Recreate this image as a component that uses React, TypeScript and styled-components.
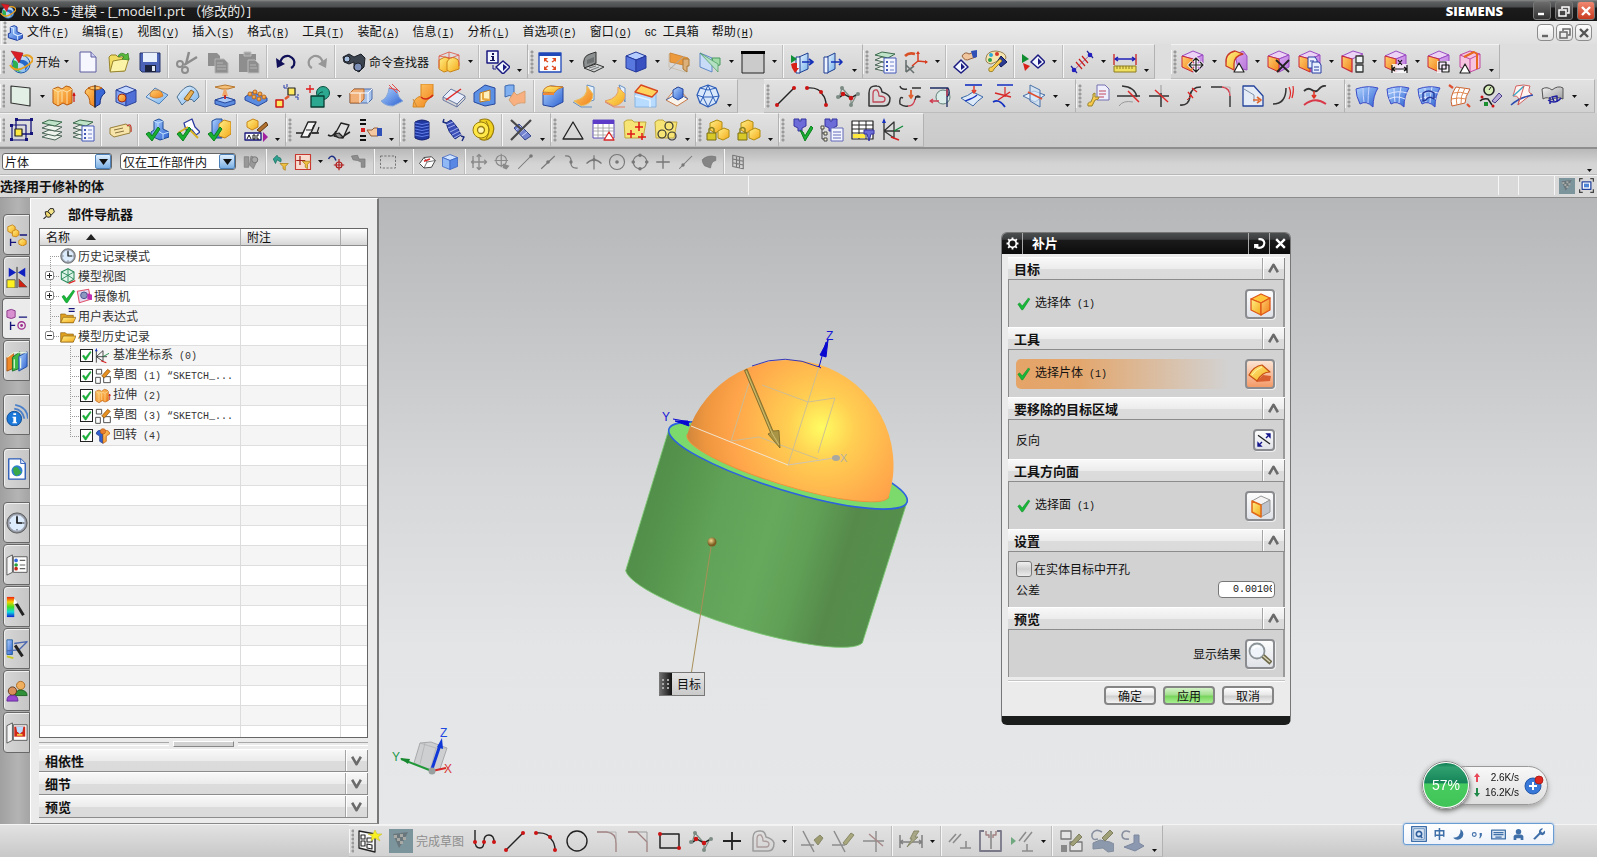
import React, { useState } from 'react';
import styled, { createGlobalStyle, css } from 'styled-components';

/* ---------- drawing data ---------- */

type Shape = [d: string, fill?: string, stroke?: string, width?: number];

const o = (x: number, y: number, r: number) =>
  `M${x - r} ${y}a${r} ${r} 0 1 0 ${2 * r} 0a${r} ${r} 0 1 0 ${-2 * r} 0Z`;
const N = 'none';
const GO = 'url(#gOrange)';
const GB = 'url(#gBlue)';
const GY = 'url(#gYellow)';
const GG = 'url(#gGray)';
const GP = 'url(#gPurple)';
const GS = 'url(#gSky)';
const RED = '#cc1414';
const NAVY = '#14147a';

const dot = (x: number, y: number, r = 2, fill = RED): Shape => [o(x, y, r), fill];

const block = (top: string, left: string, right: string, line: string): Shape[] => [
  ['M2 6L12 2L22 6L12 10Z', top, line],
  ['M2 6L12 10V22L2 18Z', left, line],
  ['M22 6L12 10V22L22 18Z', right, line],
];

const sync: Shape[] = [
  ['M1 6L12 1L22 5L12 9Z', '#ecd2f4', '#9a4cc4'],
  ['M12 9L22 5V17L12 22Z', GP, '#9a4cc4'],
  ['M1 6L12 9V22L1 17Z', GO, '#c8283c'],
];

const layerStack: Shape[] = [
  ['M2 19L9 16L22 18L15 22Z', '#eef3ee', '#4c6658'],
  ['M2 15L9 12L22 14L15 18Z', '#eef3ee', '#4c6658'],
  ['M2 10L9 7L22 9L15 13Z', '#eef3ee', '#4c6658'],
  ['M2 5L9 2L22 4L15 8Z', '#bfe3c8', '#3c6a4c'],
];

const listPage: Shape[] = [
  ['M11 8H23V23H11Z', '#f4f6ff', '#4458b8'],
  ['M13 12H15M13 16H15M13 20H15', N, '#4458b8', 2],
  ['M17 12H21M17 16H21M17 20H21', N, '#7080c8'],
];

const tick: Shape = ['M1 16L4 14L7 18L13 9L15 11L7 23Z', '#18b030', '#0c8020'];

const lBlock: Shape[] = [
  ['M9 3L14 1L18 3V11L24 14V19L15 22L6 18V14L9 12Z', GB, '#1c4c98'],
  ['M9 3L13 5V13L18 16L24 14M13 5L18 3M18 16V21', N, '#bfe0ff'],
];

const sheetBlue: Shape = ['M1 5Q12 1 23 4Q18 12 18 23Q11 16 5 20Q1 12 1 5Z', GB, '#3c4cc8'];

const splineNodes: Shape[] = [
  ['M6 4L3 14L7 10L15 14L21 10L15 21L15 14L6 4', N, '#7c8c84', 1.2],
  ['M4 13L8 10L15 14L20 11', N, '#222', 1.4],
  dot(6, 4, 2, '#7c8c84'), dot(2, 13, 2, '#7c8c84'), dot(15, 21, 2, '#7c8c84'), dot(22, 10, 2, '#7c8c84'),
  dot(7, 10, 2.3), dot(15, 14, 2.3),
];

const funnel: Shape = ['M5 1H10V3H12V1H17V8L13 10V13H9V10L5 8Z', '#6c6cd8', '#3434a0'];

const icons: Record<string, Shape[]> = {
  nx: [
    [o(12, 14, 9), GS, '#1c5ca8'],
    ['M4 10Q10 11 9 16T13 22Q6 22 4 17Z', '#2cb050'],
    ['M9 10Q18 9 20 15L16 21Q17 14 11 13Z', '#2468c8'],
    ['M1 15Q6 23 16 17T23 8Q20 4 14 6', N, '#e8a020', 2],
    ['M2 1L14 3L10 13Z', '#dc1c24', '#981018', 0.5],
  ],
  fileNew: [['M4 2H15L20 7V22H4Z', '#f6f6ff', '#5c5ca0'], ['M15 2V7H20', '#cfd0f0', '#5c5ca0']],
  open: [
    ['M2 7L4 5H9L11 7H19L17 21H3Z', '#f0dc60', '#98842c'],
    ['M6 11L22 8L18 21L3 22Z', '#fbf4a8', '#98842c'],
    ['M11 6Q14 1 19 5L21 3L22 10L15 9L17 7Q14 4 12 7Z', '#58b83c', '#2c7c20', 0.7],
  ],
  save: [
    ['M2 3H22V22H4L2 20Z', '#4c64b8', '#24346c'],
    ['M5 3H19V12H5Z', '#e8f0fc'],
    ['M7 15H18V22H7Z', '#1c2440'],
    ['M14 16H17V21H14Z', '#dfe6f4'],
  ],
  cut: [
    ['M14 2L11 14M22 7L9 15', N, '#8c8c8c', 2.5],
    [o(5, 14, 3), N, '#8c8c8c', 2],
    [o(10, 20, 3), N, '#8c8c8c', 2],
  ],
  copy: [['M2 3H11L14 6V16H2Z', '#8e8e8e'], ['M9 9H18L22 13V23H9Z', '#8e8e8e', '#b4b4b4'], ['M11 13H17M11 16H20M11 19H20', N, '#b4b4b4']],
  paste: [['M2 4H19V22H2Z', '#8e8e8e'], ['M7 2H14V6H7Z', '#9c9c9c', '#bbb'], ['M11 10H18L22 14V23H11Z', '#8e8e8e', '#bcbcbc'], ['M13 15H19M13 18H20', N, '#b4b4b4']],
  undo: [['M6 13Q8 5 15 6Q22 9 20 15Q19 17 17 18', N, '#101058', 2.2], ['M2 8L3 18L11 14Z', '#101058']],
  redo: [['M18 13Q16 5 9 6Q2 9 4 15Q5 17 7 18', N, '#979797', 2.2], ['M22 8L21 18L13 14Z', '#979797']],
  bino: [
    ['M1 7L7 4L12 7L19 4L23 8L22 17L17 22L12 19V12L7 14L2 12Z', '#3c4450', '#1c2028'],
    [o(5, 9, 3), '#a8c0e0', '#1c2028'],
    [o(16, 17, 4), '#7c90b8', '#1c2028'],
  ],
  feature: [
    ['M2 10L8 7L13 9V20L7 22L2 19Z', GY, '#c88418'],
    ['M10 12Q13 6 18 8Q22 9 22 13V19L13 22L10 20Z', GY, '#c88418'],
    ['M2 6L12 2L22 5V16M2 6V18M12 2V9M2 6L14 8L22 5', N, '#e05040', 0.8],
  ],
  info: [
    ['M1 1H12V13H1Z', '#f2f6ff', '#1a1a80', 1.5],
    ['M6 3H8V5H6ZM5 6H8V10H9V11H4V10H6V7H5Z', '#14145c'],
    ['M10 17L17 11L24 17L17 24Z', '#f2f6ff', '#1a1a80', 1.5],
    ['M17 14L21 17L17 21Z', '#1a1a80'],
    ['M7 15V19H10', N, '#1a1a80'],
  ],
  fit: [
    ['M1 3H23V22H1Z', '#fafcff', '#2048b8', 1.3],
    ['M1 3H23V6H1Z', '#2048b8'],
    ['M7 10L10 12M17 10L14 12M7 18L10 16M17 18L14 16', N, '#e04820', 1.5],
    ['M6 8H10L6 12ZM18 8H14L18 12ZM6 20H10L6 16ZM18 20H14L18 16Z', '#e04820'],
  ],
  laptop: [
    ['M3 17Q1 6 9 4L15 2V13L4 18Z', '#8c9090', '#333'],
    ['M3 18L15 14L23 17L13 22Z', '#d0d4d4', '#333'],
    ['M6 10L13 7V12L6 14Z', '#6c7070'],
    ['M8 18L15 16M10 20L18 17', N, '#777'],
  ],
  cubeBlue: block('#b4ccff', '#5878e0', '#3850c0', '#24389c'),
  planes: [
    ['M2 4L18 8V22L2 17Z', N, '#c8c0b0'],
    ['M3 3L21 8V16L3 12Z', '#ec9a3c', '#d08838'],
    ['M16 9H22V16H20V22L16 19Z', '#dcb078', '#a87838'],
    ['M2 20L17 6', N, '#a8a8a8'],
  ],
  clip: [
    ['M2 3L14 8V22L2 17Z', '#c8dcf8', '#6088c8'],
    ['M14 8H22V15L16 16Z', '#a0dca8', '#48985c'],
    ['M2 3L20 22V14Z', '#b4e0c4', '#48985c', 0.7],
  ],
  window: [['M1 2H23V23H1Z', '#cbcbcb', '#222', 1], ['M0 1H24V4H0Z', '#000']],
  imp: [
    ['M9 7L18 3V19L9 23Z', GS, '#1c3c90'],
    ['M6 7H10V23H6Z', '#eef4ff', '#1c3c90'],
    ['M1 5L7 9L1 13Z', '#109038'], ['M1 14L4 13H7V18H9L5 23L2 18Z', '#d82018'],
    ['M12 12H23M19 9L23 12L19 15', N, '#1430b8', 1.7],
  ],
  exp: [
    ['M6 7L14 3V19L6 23Z', GS, '#1c3c90'], ['M3 7H7V23H3Z', '#eef4ff', '#1c3c90'],
    ['M10 12H21M18 9L21 12L18 15', N, '#1430b8', 1.7],
  ],
  layers: layerStack,
  layerList: [...layerStack, ...listPage],
  csysMove: [
    ['M2 10V22M2 22L10 16M2 15L10 23', N, '#687070', 1.6],
    ['M14 2V11L23 12M14 11L8 16', N, '#d83c20', 1.5],
    ['M1 6Q5 2 11 4', N, '#d85028', 2.6],
    ['M12 4L14 1L16 4ZM21 10L24 12L21 14Z', '#d83c20'],
  ],
  handTag: [
    ['M9 6Q12 1 16 4L21 2L23 7L17 9Q12 12 9 6Z', '#f0c49c', '#94603c'],
    ['M18 1L24 0V7L20 8Z', '#3050b8'],
    ['M1 17L8 10L15 17L8 23Z', '#f2f6ff', '#1a1a80', 1.5], ['M8 13L12 17L8 20Z', '#1a1a80'],
  ],
  palette: [
    ['M2 8Q3 1 12 1Q22 2 22 8Q20 12 14 11L7 14Q1 13 2 8Z', '#f4e4b0', '#988050'],
    dot(7, 5, 2, '#2ca8d8'), dot(13, 4, 2, '#d83828'), dot(6, 10, 2, '#2ca048'),
    ['M13 12L17 6L23 12L17 17Z', '#2c3c90', '#10185c'],
    ['M5 21Q4 17 8 17L16 9L18 11L10 19Q9 23 5 21Z', GY, '#98842c'],
  ],
  triTag: [
    ['M1 4L8 9L1 13Z', '#108c30'], ['M2 13L9 16L4 21Z', '#d82018'],
    ['M10 12L17 5L24 12L17 18Z', '#f2f6ff', '#1a1a80', 1.5], ['M17 8L21 12L17 15Z', '#1a1a80'],
  ],
  measure: [
    ['M2 22L22 3', N, '#a060a0'], ['M1 16L7 23M17 1L23 8', N, '#24249c', 1.2],
    ['M6 12L12 19M9 9L15 16M12 6L18 13', N, '#c81c1c', 1.2],
    dot(4, 20, 2.3, '#2020c0'), dot(20, 5, 2.3, '#2020c0'),
  ],
  ruler: [
    ['M1 4V15M23 4V15', N, '#cc2020', 1.3],
    ['M2 9H22M5 7L2 9L5 11M19 7L22 9L19 11', N, '#2020b8', 1.5],
    ['M1 16H23V22H1Z', '#f0e060', '#8c7c20'],
    ['M4 16V19M7 16V19M10 16V19M13 16V19M16 16V19M19 16V19', N, '#8c7c20'],
  ],
  syncMove: [...sync, ['M15 8V22M8 15H22M12 11L15 8L18 11M12 19L15 22L18 19M11 12L8 15L11 18M19 12L22 15L19 18', N, '#fff', 3], ['M15 8V22M8 15H22M12 11L15 8L18 11M12 19L15 22L18 19M11 12L8 15L11 18M19 12L22 15L19 18', N, '#222', 1.2]],
  syncPull: [
    ['M11 5L19 1L23 6V20L14 18Z', GP, '#9a4cc4'], ['M2 14Q1 3 11 1L19 4Q10 6 10 14V20L2 16Z', GY, '#c83828', 1.3], ['M15 13L20 22H10Z', '#fff', '#222', 1.2],
  ],
  syncDelete: [...sync, ['M9 10L22 22M22 10L10 22', N, '#222', 1.8]],
  syncCopy: [...sync, ['M10 7H17L19 10V18H10Z', '#e6eeff', '#283ca0'], ['M14 12H21L23 15V23H14Z', '#e6eeff', '#283ca0'], ['M12 11H16M16 17H21M16 20H21', N, '#283ca0']],
  syncGroup: [
    ['M1 6L12 1L22 4L11 9Z', '#ecd2f4', '#9a4cc4'], ['M1 6L11 9V22L1 17Z', GO, '#c8283c', 1.3],
    ['M15 6H22V13H15ZM15 15H22V22H15Z', '#eef4f4', '#333', 1.3],
  ],
  syncDim: [...sync, ['M8 14H23V23H8Z', '#ffffffcc'], ['M8 15V23M23 15V23M8 19H23M11 17L8 19L11 21M20 17L23 19L20 21M14 10L18 15M18 10L14 15', N, '#111', 1.2]],
  syncPattern: [...sync, ['M10 11H23V23H10Z', '#ffffffcc'], ['M12 12H19V19H12ZM15 15H22V22H15Z', N, '#111', 1.2]],
  syncShell: [
    ['M2 5L12 1L22 4V18L12 22L2 17Z', '#f6c4e0', '#c048a0'], ['M2 5L12 9L22 4M12 9V22', N, '#c048a0'], ['M6 7L16 2L19 4V19', N, '#e86820', 2], ['M7 14L12 23H2Z', '#fff', '#222', 1.2],
  ],
  plane: [['M2 2L21 4V22L2 19Z', '#e2efe4', '#333', 1.2]],
  extrude: [
    ['M1 5L6 3L10 5L14 2L18 3L20 5V19L15 21L11 19L6 22L1 19Z', GO, '#b85c10'], ['M6 8V21M10 7V18M1 5L6 8L10 6L15 8L20 5M15 8V20', N, '#fbe0a8'], ['M22 10V18M21 12L22 9L23 12', N, RED, 1.2],
  ],
  revolve: [
    ['M12 4Q2 3 2 9Q7 12 7 20L12 23Z', GO, '#b85c10'], ['M12 4Q22 3 22 9Q17 12 17 20L12 23Z', '#3868d8', '#102c80'],
    ['M5 4Q12 0 19 4Q12 8 5 4Z', '#ffc060', '#b85c10'], ['M12 1V24', N, '#222'],
  ],
  hole: [...block('#c4d8ff', '#80a0f0', '#5070d8', '#2c449c'), [o(8, 14, 4), GO, '#a02818']],
  boss: [['M1 13L10 4L23 11L14 20Z', GS, '#5080b8'], ['M5 12Q5 6 11 6T18 12Q11 16 5 12Z', GO, '#c8843c']],
  sheetHole: [['M1 13Q8 2 14 2Q22 4 23 13L18 18Q15 11 6 21Z', GS, '#4c7090'], ['M8 15L15 6L18 8L12 17Z', '#e8b050', '#906020']],
  flange: [['M2 3L12 1L22 3L15 5H9Z', '#f4c078', '#b87830'], ['M9 12L11 5H13L15 12Z', '#f0a868'], ['M2 16L12 13L22 16V20L12 23L2 20Z', '#5c8ce0', '#28489c'], ['M2 16L12 19L22 16L12 13Z', '#a8c8f8', '#28489c'], ['M12 11V15', N, RED, 1.6]],
  patternGeo: [['M1 13L8 8L23 14V17L14 22L1 16Z', '#5c8ce0', '#28489c'], ...[[6, 10], [11, 8], [10, 13], [16, 10], [15, 15], [20, 13]].map(([x, y]): Shape => [o(x, y, 2), GO, '#b86820'])],
  featTransform: [['M1 16H8V23H1Z', '#ffe860', RED, 1.5], ['M13 4H20V11H13Z', '#ffe860', '#222', 1.2], ['M10 15L14 12', N, '#e05830', 2.4], ['M9 1V4H12M12 0V3M20 13H23V16M22 11H24', N, '#2838a8']],
  unite: [[o(17, 9, 6.5), '#2ca890', '#0c5040'], ['M5 12H18V23H5Z', '#2ca890', '#083c30', 1.3], ['M4 1V9M0 5H8', N, '#e01818', 1.3], ['M12 12A5 5 0 0 1 17 8', N, '#0c5040']],
  splitBody: [['M1 9L5 5H23V15L19 19H1Z', '#a8c4ec', '#4c6ca8'], ['M1 9L5 5H15V15L11 19H1Z', '#f0b078', '#b86c30'], ['M1 9H19V19M19 9L23 5M11 9V19', N, '#fff']],
  draft: [['M9 4L17 6Q18 14 23 17L13 22Q5 22 1 17Q8 14 9 4Z', GB, '#88a8d8'], ['M9 1L17 9M12 0L20 8M9 4L18 6', N, '#e05050', 1]],
  blendPipe: [['M10 0H22V12Q14 16 13 23H2Q2 14 10 12Z', GO, '#d88820'], ['M10 13Q15 18 22 11', N, '#d02818', 1.5], ['M2 15L6 23', N, '#c88838']],
  pad: [['M1 13L9 5L23 12L15 20Z', '#e8eefa', '#6878a0'], ['M1 13V16L15 23L23 15V12M15 20V23', N, '#6878a0'], ['M4 16L19 5', N, '#e02828', 1.5]],
  shell: [['M1 9L12 1L22 4V20L12 22L1 18Z', '#5c90e4', '#28489c'], ['M7 9L17 6V16L7 18Z', '#fff0c0', '#b87820'], ['M10 8V15L17 16', N, '#e8a840', 2]],
  trimBody: [['M1 2L5 1H10V13Q5 10 1 13Z', '#80b0f0', '#3c68b0'], ['M10 8L13 11L21 7V19Q14 18 10 22L5 16Z', '#f8b080', '#d8a070']],
  edgeBlend: [['M2 9Q3 3 10 2L22 3V18L12 23L2 21Z', GB, '#24449c'], ['M2 8Q3 3 9 2L22 3Q15 5 13 9Z', GY, '#d88020'], ['M2 10H13', N, '#f08838', 2]],
  faceBlend: [['M15 1L22 3V16L16 18Z', '#e4f0ff', '#6890c0'], ['M15 2Q16 14 2 17L9 22Q21 20 21 10Z', GO, '#e8c060'], ['M1 18L9 23H20', N, '#6890c0']],
  softBlend: [['M16 1L22 4V18Z', '#e4f0ff', '#6890c0'], ['M15 3Q17 14 2 17L11 22Q22 20 22 10Z', GY, '#e8a060'], ['M2 18L11 23H22', N, '#e08060']],
  chamfer: [['M1 9H22V23H1Z', '#b8dcff', '#88b4e0'], ['M1 8L7 1L24 7L18 13Z', '#ffd45c', '#d84820', 1.4], ['M1 12L16 16V23', N, '#e4f2ff', 1.6]],
  pyramid: [['M12 3L1 16L12 22L23 15Z', '#f8f4ec', '#c87848'], ['M8 6L13 3L18 5V13L13 16L8 13Z', GB, '#24449c'], ['M1 16L8 12M18 12L23 15', N, '#4868a8']],
  poly: [['M12 1L20 4L23 12L20 19L12 23L4 19L1 11L4 4Z', '#d8e8fa', '#2c5cb8', 1.2], ['M12 1L7 13L12 23L17 13ZM1 11L7 13H17L23 12M4 4L12 6L20 4M4 19L7 13M20 19L17 13', N, '#2c5cb8']],
  line: [['M3 21L20 4', N, '#222', 1.4], dot(3, 21), dot(20, 4)],
  arc: [['M2 4Q14 3 17 10Q21 14 21 21', N, '#222', 1.4], dot(2, 4), dot(16, 8), dot(21, 21)],
  spline: splineNodes,
  offsetCurve: [['M2 22V9Q2 1 10 2Q14 2 15 8Q22 10 23 14Q23 22 17 22Z', N, '#333', 1.5], ['M6 18V10Q6 5 10 6Q12 8 12 12Q18 12 18 15Q18 18 15 18Z', N, '#c04858', 1.3]],
  bridge: [['M2 2Q3 6 9 5M5 14Q1 12 2 20Q6 23 10 22M14 4H23M17 13H22Q18 10 17 16', N, '#333', 1.4], ['M10 22Q16 22 17 15', N, '#d04050', 1.4], ['M13 6V13M11 11L13 14L15 11', N, '#e06030', 1.8]],
  circleOn: [[o(14, 13, 7), '#dcece8', '#608078'], ['M1 4H19Q22 9 18 13M18 4V23', N, '#1c2c60', 1.3], ['M1 17H10M4 15L1 17L4 19M18 5V12', N, '#d03c50', 1.3]],
  project: [['M5 1H22', N, '#1430c0', 1.6], ['M1 14Q8 12 13 8L23 13Q17 17 13 22Z', '#dfeaf8', '#3c68a8'], ['M5 17Q14 14 17 11', N, '#1430c0', 1.3], ['M14 2V8M12 6L14 9L16 6', N, '#e04030', 1.5]],
  combine: [['M6 1H22M2 18Q8 14 14 23', N, '#1430c0', 1.7], ['M4 9L20 13M7 16L19 8', N, '#d82828', 1.5], ['M14 3V13', N, '#d82828', 1.2]],
  section: [['M1 12L12 7L23 11L13 18Z', '#e8f0fa', '#4870a8'], ['M8 1L18 6V23L8 17Z', '#cfe4f8aa', '#4870a8'], ['M6 8L20 15', N, '#e05030', 1.6]],
  editCurve: [['M11 1H19L23 5V16H11Z', '#eeeefc', '#7470b0'], ['M13 7H20M13 10H20M13 13H18', N, '#d08090', 1.4], ['M2 22Q1 18 5 18L7 13Q6 9 9 9V13L13 13Q13 16 9 16L6 22Z', GY, '#98842c']],
  trimCurve: [['M5 2Q18 3 20 13M0 12H23', N, '#333', 1.4], ['M11 7L22 18', N, '#e02828', 1.5], ['M2 22Q6 16 16 18', N, '#999', 1]],
  trimCorner: [['M1 12H21M13 9V23', N, '#333', 1.5], ['M13 1V9', N, '#999', 1], ['M7 6L20 18', N, '#e02828', 1.4]],
  divide: [['M1 21Q10 22 11 12Q12 3 22 3', N, '#333', 1.6], ['M9 8L14 14M13 4L18 8', N, '#e02828', 1.4], ['M8 16L13 11', N, '#e02828']],
  fillet: [['M1 3H12M20 12V23', N, '#333', 1.4], ['M12 3Q20 4 20 12', N, '#d83848', 1.4], ['M14 3H20V10', N, '#aaa', 0.8]],
  stretch: [['M2 2V22H22V12L13 2Z', '#e6ecf6', '#24449c', 1.3], ['M3 5L13 11V18', N, '#8090a8'], ['M12 16H18M16 13L20 16L16 19', N, '#e06830', 1.6]],
  arcLength: [['M1 20Q14 20 14 4', N, '#333', 1.5], ['M17 15Q20 9 17 3M20 14Q22 7 21 2', N, '#e02828', 1.2]],
  smooth: [['M1 7Q5 3 9 6T16 5T23 2', N, '#333', 1.8], ['M1 21Q12 12 23 20', N, '#d83848', 1.8], ['M11 7V13M9 11L11 14L13 11', N, '#e03020', 1.5]],
  surf1: [sheetBlue, ['M8 4Q8 12 9 18M14 3Q13 12 13 19', N, '#c8d4ff']],
  surf2: [sheetBlue, ['M8 4Q8 12 9 18M15 3Q13 12 13 19M2 10Q12 6 21 9M3 15Q11 11 19 15', N, '#dfe6ff']],
  surf3: [sheetBlue, ['M8 4Q8 12 9 18M15 3Q13 12 13 19M2 10Q12 6 21 9M3 15Q11 11 19 15', N, '#dfe6ff'], ['M6 17V9Q12 5 17 9V15Q12 11 9 16Z', N, '#24389c', 1.4]],
  surf4: [['M8 3L22 5Q17 13 17 19L4 22Q1 13 8 3Z', '#fff', '#c86030'], ['M12 3Q7 13 9 21M17 4Q12 13 13 20M5 9Q12 7 20 10M3 15Q11 13 18 15', N, '#e08850'], ['M5 4L1 1M19 20L22 23', N, '#e05030', 2.2]],
  magn: [[o(10, 6, 5), '#d6ecb8', '#222', 1.6], ['M10 6L12 3', N, '#222'], ['M13 17L20 9L23 12L16 19Z', '#b8a8d8', '#443c88'], ['M1 17Q4 14 9 15L13 21', N, '#222', 1.4], ['M5 18H9V22H5Z', '#1c9030'], dot(3, 13, 1.5), dot(14, 22, 1.5)],
  surf5: [['M6 2Q14 0 20 2Q17 9 22 10Q15 15 8 21Q11 11 3 12Z', '#fff4f0', '#d06060'], ['M1 21Q10 13 23 11', N, '#2c4cb0', 1.5], ['M3 12Q8 8 14 2', N, '#38a8c8', 1.3], ['M14 2Q11 12 8 21', N, '#d06060']],
  blanket: [['M1 5Q6 2 11 6Q17 1 22 4V15Q16 12 11 16Q6 12 2 15Z', GG, '#555'], ['M7 16Q14 21 20 14M9 13V20M13 17L11 13L16 12V18', N, '#2020a0', 1.5]],
  group: [['M7 2H22V16H7Z', N, '#14147a', 1.3], ['M3 7H17V22H3Z', N, '#14147a', 1.2], ['M6 11H13V18H6Z', '#ffe840', '#222', 1.2], ['M6 0H9V3H6ZM21 0H24V3H21ZM21 14H24V17H21ZM1 6H4V9H1ZM1 20H4V23H1ZM16 20H19V23H16Z', NAVY]],
  tagCard: [['M2 10L18 6L22 9V15L6 19L2 16Z', '#f6e4a8', '#98803c'], ['M6 12L15 10M7 15L16 13', N, '#887040'], ['M19 8Q24 4 23 14', N, '#c03828', 1.2]],
  lCheck: [...lBlock, tick],
  lCheckWire: [['M8 5L16 1L19 9L24 14L20 17L16 12L10 12Z', '#fff', '#2c3ca0', 1.3], ['M2 15L12 9M13 11L22 20', N, '#d8b020', 1.8], tick],
  lCheckCube: [['M5 3L9 1H15V20H5Z', GB, '#1c4c98'], ['M12 6L17 2L24 4V16L18 20L12 18Z', GY, '#c88418'], tick],
  textBox: [['M3 4L9 1L14 3V9L8 12L3 9Z', GY, '#c88418'], ['M13 12L22 4L24 7L16 14Z', '#b07030', '#603810'], ['M1 15H17V22H1Z', '#fff', '#14147a', 1.3], ['M3 21L5 17L7 21M9 17V21H11V17ZM15 17H13V21H15', N, '#111'], ['M19 14L24 19L19 24Z', '#a020a0']],
  trim1: [['M0 15H8M16 15H23', N, '#222', 1.5], ['M5 19L12 4H20L13 19Z', '#f4f4f4', '#222', 1.4], ['M12 19L14 15H21L23 9M10 12L16 12L18 7', N, '#222', 1.2]],
  trim2: [['M1 17Q6 20 9 13M15 19L23 14', N, '#222', 1.5], ['M7 18L14 5L22 7L16 20Z', '#e0e0e0', '#222', 1.4], ['M8 16Q11 22 16 19L12 15Z', '#888', '#222', 1.2]],
  handList: [['M2 2H8M2 6H8M2 18H8M2 22H8', N, '#111', 2], ['M3 10H7V14H3Z', '#d82020'], ['M9 12H14Q15 9 20 10V18H13Z', '#f4c8a0', '#94603c'], ['M19 10H24V18H19Z', '#3050b8']],
  coil: [['M5 4Q12 0 19 4V20Q12 24 5 20Z', '#2038a0', '#142070'], ['M5 5Q12 8 19 5M5 8Q12 11 19 8M5 11Q12 14 19 11M5 14Q12 17 19 14M5 17Q12 20 19 17', N, '#6c88f0', 0.9]],
  spring: [['M5 5L10 2Q18 10 20 17L14 21Q7 14 5 5Z', '#3c50b8', '#1c2c80'], ['M5 7L12 4M7 10L14 7M9 14L17 10M11 17L19 13M13 20L20 16', N, '#b0bcf4', 0.9], ['M5 5L2 4L3 1M20 18L23 19L21 23', N, '#1c2c80', 1.4]],
  springYellow: [['M8 2Q16 -1 20 5T19 19Q14 24 8 21Z', '#f0d020', '#987c10', 1.2], [o(9, 12, 8), '#ffe848', '#987c10'], [o(9, 12, 3.5), '#fff4b0', '#987c10', 1.3], ['M14 3Q20 12 14 21', N, '#987c10']],
  springCut: [['M5 10L10 6L22 18L16 22Z', '#7484d0', '#34448c'], ['M7 12L12 8M10 15L15 11M13 18L18 14', N, '#d0d8f4', 1], ['M2 22L22 2M2 2L13 12', N, '#484848', 2.2]],
  triangle: [['M12 4L22 21H2Z', N, '#222', 1.3]],
  tableTri: [['M1 2H22V20H1Z', '#fff', '#5c4cb8'], ['M1 2H22V6H1Z', '#5c3cc8'], ['M1 10H22M1 13H22M1 17H22M6 6V20M11 6V20M17 6V20', N, '#999', 0.8], ['M17 14L22 22H12Z', '#fff', '#d82828', 1.3]],
  folderPts: [['M1 4L4 2H9L11 4H23L20 20H2Z', '#f6e474', '#c0a840'], ['M16 4V13M12 9H20M8 12V20M4 16H12M19 15V22M15 19H23', N, '#e01818', 1.5]],
  folderRings: [['M1 4L4 2H9L11 4H23L20 20H2Z', '#f6e474', '#c0a840'], [o(15, 8, 4), N, '#333', 1.2], [o(8, 16, 4), N, '#333', 1.2], [o(18, 18, 4), N, '#333', 1.2]],
  goldLock: [['M4 5L11 2L16 4V12L9 15L4 12Z', GY, '#b08c10'], ['M12 13L18 10L23 12V19L17 22L12 20Z', GY, '#b08c10'], ['M1 15H10V22H1Z', '#d8c828', '#786c10'], ['M3 15V11Q6 8 8 11V15', N, '#888020', 1.5]],
  funnelCheck: [funnel, ['M11 12L14 14L16 18L22 8L24 10L16 23Z', '#18b030', '#0c8020']],
  funnelTree: [funnel, ['M11 10H23V23H11Z', '#f4f6ff', '#6068b8'], ['M13 14H21M13 17H21M13 20H21', N, '#6068b8'], ['M1 8H4V11H1ZM4 14H7V17H4ZM4 20H7V23H4Z', '#f4f4d0', '#444'], ['M2 11V21H4M2 15H4', N, '#444']],
  gridFunnel: [['M1 3H22V21H1Z', '#fff', '#222', 1.2], ['M1 7H22M1 11H22M1 15H22M8 3V21M15 3V21', N, '#222'], ['M2 16H14V20H2Z', '#ffe840'], ['M13 12H23V16H20L18 23L16 16H13Z', '#6c6cd8', '#3434a0']],
  csys: [['M2 22V3M2 13L12 4V20ZM2 13L18 13', N, '#333', 1.3], ['M12 13L21 8', N, '#108838', 1.3], ['M9 19L17 22', N, '#d82020', 1.6], ['M2 0L0 5H4Z', '#1830c0']],
  /* selection bar */
  selFilter: [['M3 5H9V19H3ZM12 4L21 8L15 21L10 16Z', '#989898', '#7c7c7c'], [o(17, 9, 4), '#aaa', '#777', 1.3]],
  selReset: [['M3 8L8 3L10 6Q15 6 13 12L8 9L6 14Z', '#30a090', '#187060'], ['M12 14H23L19 18V23L16 21V18Z', '#f0c040', '#a87c18']],
  selAll: [['M2 2H22V22H2Z', '#f8dcd0', '#c83830', 1.5], ['M8 4V16M3 10H15', N, '#a01c18', 1.6], ['M11 11H22L18 15V21L15 19V15Z', '#f0c040', '#a87c18']],
  selSnap: [['M2 8Q5 2 10 6L12 10', N, '#1c2c80', 2], ['M16 8V23M9 16H23', N, '#b01818', 1.5], [o(16, 16, 4), N, '#b01818', 1.5]],
  selGray: [['M2 4L10 3L12 8H20V19H15V12L10 10L4 9Z', '#8e8e8e', '#777']],
  selRect: [['M2 4H22V20H2Z', N, '#555', 1]],
  selWire: [['M2 14L8 6L18 5L23 10L18 19L8 20Z', '#fff', '#444', 1.3], ['M8 6L12 12L8 20M12 12L23 10', N, '#444'], ['M8 11L16 8', N, '#d82828', 2]],
  selCube: block('#d0e4ff', '#90b8f4', '#5888e4', '#3860c0'),
  selMove: [['M12 2V22M2 12H22M9 5L12 2L15 5M9 19L12 22L15 19M5 9L2 12L5 15M19 9L22 12L19 15M4 4V20', N, '#8a8a8a', 1.8]],
  selMove2: [[o(11, 10, 7), N, '#8a8a8a', 1.6], ['M11 1V19M2 10H20', N, '#8a8a8a', 1.6], ['M13 14L22 17L18 22L13 20Z', '#8a8a8a']],
  snEnd: [['M3 21L20 4', N, '#777', 1.4], dot(20, 4, 2.4, '#777')],
  snMid: [['M3 21L21 4', N, '#777', 1.4], dot(12, 12, 2.4, '#777')],
  snCtrl: [['M4 4Q13 3 12 12T21 20', N, '#777', 1.6], dot(12, 12, 2.2, '#777')],
  snInt: [['M12 3V22M2 14Q12 4 22 14', N, '#777', 1.6], dot(12, 9, 2.2, '#777')],
  snCenter: [[o(12, 12, 10), N, '#777', 1.5], dot(12, 12, 2.4, '#777')],
  snQuad: [[o(12, 12, 9), N, '#777', 1.5], dot(12, 3, 2.4, '#777'), dot(12, 21, 2.4, '#777'), dot(3, 12, 2.4, '#777'), dot(21, 12, 2.4, '#777')],
  snPoint: [['M12 3V21M3 12H21', N, '#777', 1.8]],
  snOn: [['M3 21L20 4', N, '#777', 1.4], dot(8, 16, 2.2, '#777')],
  snFace: [['M3 9Q10 2 21 5L21 10Q15 11 14 20L6 17Q3 13 3 9Z', '#858585', '#777']],
  snGrid: [['M5 3L19 6V21L5 18ZM5 8L19 11M5 13L19 16M10 4V19M14 5V20', N, '#777', 1.5]],
  /* sketch bar */
  skNew: [['M1 2L17 5V23L1 19Z', '#fafafa', '#222', 1.3], ['M3 6H7V10H3ZM9 9H14V13H9ZM3 12H7V17H3ZM9 15L14 16V20L9 19Z', N, '#222', 1.1], ['M17 1L19 5L24 5L20 8L22 12L17 9L13 12L14 7L10 5L15 5Z', '#f8f020', '#c8c030', 0.6]],
  flag: [['M0 0H24V24H0Z', '#7c949c'], ['M4 5L19 3L14 13L10 19Z', '#69777d'], ['M5 6H8V9H5ZM11 5H14V8H11ZM8 9H11V12H8ZM14 8H17V11H14ZM11 12H14V15H11Z', '#a8a8a4']],
  profile: [['M3 1V12Q3 19 8 19Q12 19 12 12Q12 6 17 6Q22 6 22 13', N, '#222', 1.4], dot(3, 13), dot(12, 13), dot(22, 13)],
  circle: [[o(12, 12, 10), N, '#222', 1.4]],
  skFillet: [['M1 3H11Q20 4 20 14V23', N, '#a08080', 1.3], ['M12 3H20V12', N, '#aaa', 0.8]],
  skChamfer: [['M1 3H10L20 13V23', N, '#a08080', 1.3], ['M10 3H20V13', N, '#999', 1]],
  rect: [['M2 5H21V19H2Z', N, '#222', 1.5], dot(2, 5), dot(21, 19)],
  plus: [['M12 3V21M3 12H21', N, '#222', 1.8]],
  skOffset: [['M2 22V9Q2 1 10 2Q14 2 15 8Q22 10 23 14Q23 22 17 22Z', N, '#9c9c9c', 1.5], ['M6 18V10Q6 5 10 6Q12 8 12 12Q18 12 18 15Q18 18 15 18Z', N, '#ad9c9c', 1.3]],
  qTrim: [['M3 2L14 23M1 16H14', N, '#8c8c8c', 1.5], ['M14 11L20 6L23 9L18 16Z', '#9c9c70', '#88886a']],
  qExtend: [['M3 2L14 23M1 16H14', N, '#8c8c8c', 1.5], ['M12 14L20 4L23 6L15 16Z', '#a8a87c', '#88886a']],
  mkCorner: [['M1 12H22M14 2V23', N, '#8c8c8c', 1.4], ['M7 5L21 17', N, '#a88888', 1.4]],
  autoDim: [['M1 6V19M23 6V19M1 13H23M4 11L1 13L4 15M20 11L23 13L20 15', N, '#808080', 1.5], ['M8 18L13 10H11L15 2H20L16 8H19Z', '#a8a888', '#88886a']],
  geoCons: [['M1 13L8 5M5 14L13 5M12 19H23M18 12V19', N, '#8c8c8c', 1.6]],
  symm: [['M5 2H1V22H22V2H18', N, '#787888', 1.8], ['M12 2V20', N, '#787878', 1.3], ['M7 2V6H10V9M17 2V6H14V9', N, '#a08080', 1.4]],
  autoCons: [['M1 8L6 12L1 16Z', '#70a880'], ['M9 12L16 3M14 13L22 3M12 22H23M17 15V22', N, '#8c8c8c', 1.5]],
  skEdit: [['M2 2H12V10H2ZM11 13H23V22H11Z', '#e4e4e4', '#777', 1.3], ['M2 16H8V23H2Z', '#888'], ['M11 15L20 5L23 8L14 17Z', '#a0a078', '#808060']],
  skAttach: [['M12 3Q5 -1 2 5Q1 12 8 10', N, '#8890a0', 1.6], ['M3 14L10 11L20 13L24 15V22L18 23L13 19L3 20Z', '#8c98ac', '#808c9c'], ['M12 9L20 1L23 4L15 12Z', '#a0a078', '#808060']],
  skUpdate: [['M9 3Q2 0 1 6Q1 11 8 10', N, '#8890a0', 1.6], ['M13 6H18V14L23 17L14 22L3 18L13 14Z', '#8c98b0', '#7c88a0']],
  /* navigator and tabs */
  tabAssembly: [['M2 3L7 1L10 3V8L6 10L2 8Z', GY, '#c88418'], ['M7 8L11 6L14 8V12L11 14L7 13Z', GY, '#c88418'], ['M15 12H23M5 16V24M5 20H11', N, '#14147a', 1.5], ['M14 18L18 16L22 18V22L18 24L14 22Z', GY, '#c88418']],
  tabCons: [['M3 2V12L11 7ZM21 2V12L13 7Z', '#1020c0'], ['M12 1V24', N, '#222'], ['M1 15H10V24H1Z', '#fff020', '#555'], ['M14 14V23H23Z', '#d02010', '#555', 0.7]],
  tabPart: [['M1 3Q6 0 10 3V10Q6 13 1 10Z', '#d890d0', '#883888'], ['M14 10H23M5 15V24M5 19H10', N, '#14147a', 1.5], [o(17, 19, 4), N, '#a03090', 1.4], dot(17, 19, 1.6, '#a03090')],
  tabBooks: [['M1 8L8 3V20L1 23Z', '#f08828', '#a05010'], ['M7 8L15 2V20L7 23Z', '#40b848', '#187028'], ['M14 7L23 2V18L14 23Z', GB, '#1c4ca0'], ['M1 8L8 3H23M9 10V20M16 9V20', N, '#f0ffe8', 1.2]],
  tabInfo: [[o(9, 16, 8), '#1c78d8', '#0c4890'], ['M8 10H11V12H8ZM7 14H11V20H12V21H7V20H8V15H7Z', '#fff'], ['M9 5Q18 6 20 16M10 1Q23 3 24 16', N, '#4c80c8', 2]],
  tabWeb: [['M3 1H16L21 6V23H3Z', '#fff', '#2c5cb8', 1.5], ['M16 1V6H21', '#dce8ff', '#2c5cb8'], [o(12, 14, 6), '#3080d0'], ['M8 11Q12 8 14 12L17 16L11 20Q7 16 8 11Z', '#38a848']],
  clock: [[o(12, 12, 11), '#8c949c', '#555'], [o(12, 12, 9), '#dcecfc', '#aab'], ['M12 5V12H18', N, '#111', 1.8], ['M12 4V5M12 19V20M4 12H5M19 12H20', N, '#111', 1.5]],
  tabRoles: [['M1 4L7 1V20L1 23Z', '#f4f4f4', '#555'], ['M8 3H23V20H8Z', '#fff', '#555'], dot(11, 7, 2, '#3068e0'), dot(11, 12, 2, '#28a038'), dot(11, 16, 2, '#c82818'), ['M15 7H21M15 12H21M15 16H21', N, '#666', 1.2]],
  tabColors: [['M1 1H9V23H1Z', 'url(#gRainbow)'], ['M11 8L19 21', N, '#222', 3.2], ['M9 3L13 8L8 9Z', '#fff']],
  tabWand: [['M1 2H7V18H1Z', GB, '#2860a0'], ['M9 6L23 4L14 13L1 14', N, '#4c68b0', 1.5], ['M10 8L18 20', N, '#222', 3.2], ['M1 20L8 22', N, '#c8c820', 2]],
  tabPeople: [[o(16, 6, 4.5), '#f0b060', '#a86820'], ['M10 17Q11 10 17 11Q23 12 23 17Z', '#309038', '#186020'], [o(7, 12, 4.5), '#d8905c', '#603818'], ['M1 23Q1 16 7 17Q13 16 13 23Z', '#9848d0', '#602898']],
  tabFilm: [['M1 4L7 1V20L1 23Z', '#f4f4f4', '#555'], ['M8 3H23V20H8Z', '#fff', '#555'], ['M9 5H21V16H9Z', '#d02818'], ['M11 5H19L18 10L15 13L12 10Z', '#b8dcff'], ['M12 14H18', N, '#f8c040', 2]],
  pin: [['M1 22L8 16', N, '#222', 2.2], ['M4 9Q8 7 12 11T14 18L9 19Q4 17 4 9Z', '#f0d870', '#222', 1.8], ['M9 8L13 3H19L21 9L15 15Z', '#f4e488', '#222', 1.8]],
  views: [['M2 6L12 1L21 6V17L12 22L2 17Z', '#dff4e8', '#2c8c5c', 1.6], ['M2 6L12 11L21 6M12 1V22M2 17L12 11L21 17', N, '#2c8c5c', 1.4], ['M13 23L23 19', N, '#e02828', 1.8]],
  camera: [['M2 5L19 2L22 17L5 22Z', '#e8d8f0', '#e05870', 1.6], [o(12, 11, 5), '#8c98c0', '#4c5890', 1.5], ['M17 8L24 10V18L17 17Z', '#c030b0']],
  greenTick: [['M3 13L6 11L10 16L20 3L22 5L11 22H9Z', '#18b838', '#0c9028']],
  folder: [['M1 7H8L10 9H20V21H1Z', '#e0a020', '#8c6010'], ['M5 12H24L20 21H1Z', GY, '#8c6010']],
  folderExpr: [['M1 9H8L10 11H20V22H1Z', '#e0a020', '#8c6010'], ['M5 14H24L20 22H1Z', GY, '#8c6010'], ['M13 1H22M13 5H22', N, '#14147a', 2]],
  sketch: [['M2 2H10V9H2ZM1 14H8V23H1ZM13 13H23V22H13Z', '#fff', '#444', 1.4], ['M10 12L19 2L23 5L14 15Z', '#e89020', '#805010']],
  revolveSm: [['M12 4Q2 2 2 9L7 12V20L12 23Z', '#3060d0', '#102c80'], ['M12 4Q22 2 22 9L17 12V20L12 23Z', GO, '#b85c10'], [o(12, 5, 4), '#e88030', '#b85c10']],
  /* dialog */
  solid: [['M3 7L13 2L22 6L13 11Z', '#ffc83c', '#e05818', 1.3], ['M3 7L13 11V23L3 18Z', GY, '#e05818', 1.3], ['M22 6L13 11V23L22 18Z', GO, '#e05818', 1.3]],
  sheet: [['M8 20L22 19L23 14L15 13Z', '#d86030'], ['M1 13Q6 4 14 3L22 10Q14 10 9 19Z', GY, '#c85010', 1.2], ['M4 13Q8 7 14 5', N, '#fff4a8']],
  faceCube: [['M4 7L13 2L22 6L13 11Z', '#f4f4f4', '#999'], ['M22 6L13 11V23L22 18Z', '#c0c4cc', '#999'], ['M4 7L13 11V23L4 18Z', GY, '#e06818', 1.5]],
  reverse: [['M3 5L21 18', N, '#222', 2], ['M6 18L9 15M15 9L18 6', N, '#14148c', 2], ['M14 2H22V10ZM2 14V22H10Z', '#14148c']],
  glass: [[o(9, 9, 7.5), '#eef4fa', '#8c9498', 1.8], ['M5 7Q7 3 12 5', N, '#fff', 2], ['M15 14L23 21', N, '#6c6848', 4.5], ['M15 14L22 20', N, '#d8d4b8', 1.5]],
  gear: [['M12 1V5M12 19V23M1 12H5M19 12H23M4 4L7 7M17 17L20 20M20 4L17 7M7 17L4 20', N, '#fff', 3.4], [o(12, 12, 7), N, '#fff', 3.2]],
  reset: [['M10 4Q20 3 21 11Q20 21 9 20L5 18', N, '#fff', 3.8], ['M2 13H10V21L6 19L2 21Z', '#fff']],
  close: [['M4 4L20 20M20 4L4 20', N, '#fff', 4.4]],
  chevUp: [['M5 18L12 6L19 18', N, '#6a6a6a', 4]],
  chevDown: [['M5 6L12 18L19 6', N, '#6a6a6a', 4]],
  part: [['M5 3L11 1L15 3V10L23 14V20L15 23L2 19V13L5 12Z', GB, '#1838a0', 1.5], ['M5 3L10 5V13L16 16L23 14M16 16V22', N, '#dcecff', 1.6]],
  fullscreen: [['M1 6V1H6M18 1H23V6M23 18V23H18M6 23H1V18', N, '#444', 2], ['M5 6H19V18H5Z', '#fff', '#24449c', 2], ['M8 9H16V15H8Z', '#4c84d8']],
  moon: [['M16 2Q26 12 16 20Q8 24 2 18Q16 18 16 2Z', '#3f6fa8']],
  punct: [[o(6, 12, 3.5), N, '#3f6fa8', 2], ['M16 9H20V14L17 19H15L17 14H16Z', '#3f6fa8']],
  keyboard: [['M1 5H23V19H1Z', '#dce8f6', '#3f6fa8', 2], ['M4 9H20M4 12H20M7 16H17', N, '#3f6fa8', 2]],
  person: [[o(12, 7, 5), '#3f6fa8'], ['M3 22V15Q4 12 8 12H16Q20 12 21 15V22H16V19H8V22Z', '#3f6fa8']],
  wrench: [['M2 20L12 10Q11 4 17 2L19 3L15 7L18 10L22 6Q24 12 18 14L14 13L5 22Z', '#3f6fa8']],
  qBox: [['M1 1H23V23H1Z', '#dce8f6', '#3f6fa8', 2], ['M4 4H20V20H4Z', N, '#3f6fa8', 1], [o(12, 12, 4), N, '#2f5f9c', 2.4], ['M13 14L17 18', N, '#2f5f9c', 2.4]],
};

const Svg = styled.svg`
  display: block;
  flex: none;
`;

function Icon({ name, size = 24 }: { name: string; size?: number }) {
  return (
    <Svg width={size} height={size} viewBox="0 0 24 24" aria-hidden="true">
      {(icons[name] || []).map(([d, fill = N, stroke = N, width = 1], i) => (
        <path key={i} d={d} fill={fill} stroke={stroke} strokeWidth={width} strokeLinejoin="round"
          strokeDasharray={name === 'selRect' ? '3 2' : undefined} />
      ))}
    </Svg>
  );
}

const ramps: [string, string[]][] = [
  ['gOrange', ['#ffd070', '#f08018']],
  ['gBlue', ['#b0d4ff', '#2c60d0']],
  ['gYellow', ['#fff088', '#f4a818']],
  ['gGray', ['#f4f4f4', '#9c9c9c']],
  ['gPurple', ['#dca8f4', '#b878d8']],
  ['gSky', ['#eef8ff', '#74b0ec']],
];

const HiddenSvg = styled.svg`
  position: absolute;
`;

function Ramps() {
  return (
    <HiddenSvg width="0" height="0" aria-hidden="true">
      <defs>
        {ramps.map(([id, [a, b]]) => (
          <linearGradient key={id} id={id} x1="0" y1="0" x2="1" y2="1">
            <stop offset="0" stopColor={a} />
            <stop offset="1" stopColor={b} />
          </linearGradient>
        ))}
        <linearGradient id="gRainbow" x1="0" y1="0" x2="0" y2="1">
          {['#f02010', '#f8d000', '#40e020', '#10d8e0', '#1020d0'].map((c, i) => (
            <stop key={c} offset={i / 4} stopColor={c} />
          ))}
        </linearGradient>
      </defs>
    </HiddenSvg>
  );
}

/* ---------- base ---------- */

const Global = createGlobalStyle`
  * { box-sizing: border-box; }
  body {
    margin: 0;
    overflow: hidden;
    font: 12px/16px "Noto Sans CJK SC", sans-serif;
    color: #111;
    background: #d4d4d4;
  }
  button, input, select { font: inherit; color: inherit; margin: 0; }
  button { border: 0; padding: 0; background: none; cursor: default; }
`;

const Half = styled.span`
  font-family: "Liberation Mono", monospace;
  font-size: 10px;
  white-space: pre;
`;

/* Half-width characters take half the width of a full-width one. */
function Mixed({ text, mnemonic }: { text: string; mnemonic?: boolean }) {
  return (
    <>
      {text.split(/([\x20-\x7e“]+)/).map((part, i) => {
        if (i % 2 === 0) return part;
        const key = mnemonic && part.match(/^\((.)\)$/);
        return <Half key={i}>{key ? <>(<u>{key[1]}</u>)</> : part}</Half>;
      })}
    </>
  );
}

const Page = styled.div`
  display: flex;
  flex-direction: column;
  height: 100vh;
  min-height: 640px;
`;

/* ---------- title and menu ---------- */

const TitleBar = styled.header`
  display: flex;
  align-items: center;
  flex: none;
  height: 21px;
  padding-right: 2px;
  color: #eee;
  background: linear-gradient(#8a8a8a 0, #5c5f60 2px, #4a4c4d 7px, #1c1c1c 8px, #161616 100%);
`;

const TitleText = styled.h1`
  flex: 1;
  margin: 0 0 0 5px;
  font: 13px/20px "Open Sans", "Noto Sans CJK SC", sans-serif;
`;

const Brand = styled.span`
  margin-right: 26px;
  font: 800 13px/20px "Open Sans", sans-serif;
  color: #fff;
`;

const WindowButton = styled.button<{ $danger?: boolean }>`
  display: grid;
  place-items: center;
  width: 18px;
  height: 19px;
  margin-left: 4px;
  border: 1px solid #777;
  border-radius: 3px;
  background: ${p => (p.$danger ? 'linear-gradient(#f08870, #c83c20)' : 'linear-gradient(#6c6c6c, #333)')};
`;

const MenuBar = styled.nav`
  display: flex;
  align-items: center;
  gap: 13px;
  flex: none;
  height: 23px;
  padding: 0 5px 0 1px;
  background: linear-gradient(#ececec, #e0e0e0);
`;

const MenuLead = styled.span`
  display: flex;
  align-items: center;
  margin-right: -9px;
`;

const MenuItem = styled.button`
  white-space: nowrap;
`;

const MdiButtons = styled.span`
  display: flex;
  gap: 2px;
  margin-left: auto;
`;

const MdiButton = styled.button`
  display: grid;
  place-items: center;
  width: 17px;
  height: 17px;
  border: 1px solid #8c8c8c;
  border-radius: 4px;
  background: linear-gradient(#fff, #e2e2e2);
`;

const menus = ['文件(F)', '编辑(E)', '视图(V)', '插入(S)', '格式(R)', '工具(T)', '装配(A)', '信息(I)',
  '分析(L)', '首选项(P)', '窗口(O)', 'GC 工具箱', '帮助(H)'];

const glyphs = {
  min: 'M2 9H8',
  restore: 'M4 4V2H11V8H9M1 5H8V11H1Z',
  close: 'M2 2L10 10M10 2L2 10',
};

function Glyph({ kind, color }: { kind: keyof typeof glyphs; color: string }) {
  return (
    <Svg width="12" height="12" viewBox="0 0 12 12" aria-hidden="true">
      <path d={glyphs[kind]} fill="none" stroke={color} strokeWidth={kind === 'restore' ? 1.5 : 2.4} />
    </Svg>
  );
}

/* ---------- toolbars ---------- */

const ToolRow = styled.div<{ $height: number; $tone: string }>`
  display: flex;
  flex: none;
  height: ${p => p.$height}px;
  background: ${p => p.$tone};
`;

const Group = styled.div<{ $gap?: number }>`
  display: flex;
  align-items: center;
  flex: none;
  margin-left: ${p => p.$gap || 0}px;
  padding-right: 2px;
  border-top: 1px solid #f2f2f2;
  border-right: 1px solid #b2b2b2;
  border-bottom: 1px solid #bcbcbc;
  background: linear-gradient(#e2e2e2, #d2d2d2);
  &:first-child > :first-child { width: 5px; }
`;

const Grip = styled.span`
  flex: none;
  width: 6px;
  height: 24px;
  border-left: 1px solid #f6f6f6;
  background: radial-gradient(circle at 3px 2px, #9a9a9a 1px, transparent 2px) 0 0 / 6px 4px;
`;

const Divider = styled.span`
  flex: none;
  width: 2px;
  height: 100%;
  margin: 0 2px;
  border-left: 1px solid #bdbdbd;
  border-right: 1px solid #f6f6f6;
`;

const ToolButton = styled.button<{ $small?: boolean; $muted?: boolean }>`
  display: flex;
  align-items: center;
  flex: none;
  height: 28px;
  white-space: nowrap;
  color: ${p => (p.$muted ? '#8e8e8e' : '#111')};
  padding: ${p => (p.$small ? '0 3px 0 2px' : '0 3px 0 4px')};
`;

const ToolLabel = styled.span<{ $wide: boolean }>`
  margin-left: 3px;
  margin-right: ${p => (p.$wide ? 1 : -3)}px;
`;

const CaretButton = styled.button<{ $low?: boolean; $narrow?: boolean }>`
  display: flex;
  justify-content: center;
  align-items: center;
  flex: none;
  width: ${p => (p.$narrow ? 10 : 12)}px;
  height: 28px;
  padding-top: ${p => (p.$low ? 18 : 0)}px;
`;

function Caret({ low, narrow }: { low?: boolean; narrow?: boolean }) {
  return (
    <CaretButton $low={low} $narrow={narrow} aria-label={low ? '工具条选项' : '更多'}>
      <Svg width="5" height="3" viewBox="0 0 5 3"><path d="M0 0H5L2.5 3Z" fill="#111" /></Svg>
    </CaretButton>
  );
}

/* "v" is a drop-down arrow, "e" the overflow arrow, "|" a divider, "name:label" a button with text. */
function Items({ spec, small }: { spec: string; small?: boolean }) {
  return (
    <>
      {spec.split(' ').map((token, i) => {
        if (token === '|') return <Divider key={i} />;
        if (token === 'v' || token === 'e') return <Caret key={i} low={token === 'e'} narrow={small} />;
        const [name, label] = token.split(':');
        return (
          <ToolButton key={i} $small={small} $muted={name === 'flag'} aria-label={label || name}>
            <Icon name={name} size={small ? 18 : 24} />
            {label && <ToolLabel $wide={label.length > 2}>{label}</ToolLabel>}
          </ToolButton>
        );
      })}
    </>
  );
}

function Toolbar({ spec, gap }: { spec: string; gap?: number }) {
  return (
    <Group role="toolbar" $gap={gap}>
      <Grip />
      <Items spec={spec} />
    </Group>
  );
}

const toolRows: { height: number; tone: string; bars: [string, number?][] }[] = [
  {
    height: 35,
    tone: '#dedede',
    bars: [
      ['nx:开始 v fileNew open save | cut copy paste | undo redo | bino:命令查找器 feature v | info e'],
      ['fit v laptop v cubeBlue v planes clip v window v | imp exp e'],
      ['layerList csysMove v | handTag palette | triTag v | measure v ruler e'],
      ['syncMove v syncPull v syncDelete syncCopy v syncGroup v syncDim v syncPattern syncShell e', 16],
    ],
  },
  {
    height: 34,
    tone: '#d8d8d8',
    bars: [
      ['plane v extrude revolve hole boss sheetHole | flange patternGeo featTransform unite v splitBody draft blendPipe pad shell trimBody | edgeBlend faceBlend softBlend chamfer pyramid poly e'],
      ['line arc spline offsetCurve bridge circleOn project combine section v e', 26],
      ['editCurve trimCurve trimCorner divide fillet stretch arcLength smooth e'],
      ['surf1 surf2 surf3 surf4 magn surf5 blanket v e'],
    ],
  },
  {
    height: 34,
    tone: 'linear-gradient(#d0d0d0, #cacaca)',
    bars: [
      ['group layers layerList | tagCard | lCheck lCheckWire lCheckCube | textBox e'],
      ['trim1 trim2 handList e'],
      ['coil spring springYellow | springCut e'],
      ['triangle tableTri folderPts folderRings e'],
      ['goldLock goldLock e'],
      ['funnelCheck funnelTree gridFunnel csys e'],
    ],
  },
];

const SelectionBar = styled.div`
  display: flex;
  align-items: center;
  flex: none;
  height: 28px;
  padding: 0 2px;
  border-top: 2px solid #8e8e8e;
  border-bottom: 1px solid #b8b8b8;
  background: linear-gradient(#b9b9b9, #d4d4d4 60%, #d6d6d6);
`;

const Combo = styled.span<{ $width: number }>`
  position: relative;
  flex: none;
  width: ${p => p.$width}px;
  height: 17px;
  margin-right: ${p => (p.$width > 112 ? 4 : 8)}px;
`;

const ComboSelect = styled.select`
  appearance: none;
  display: block;
  width: 100%;
  height: 17px;
  padding: 0 18px 0 2px;
  line-height: 14px;
  border: 1px solid #666;
  border-radius: 3px;
  background: #fff;
`;

const ComboArrow = styled.span`
  position: absolute;
  inset: 1px 1px 1px auto;
  display: grid;
  place-items: center;
  width: 16px;
  border: 1px solid #4c80b8;
  border-radius: 2px;
  background: linear-gradient(#e0f0ff, #7cb0e4);
  pointer-events: none;
`;

const Spacer = styled.span`
  flex: 1;
`;

const CueBar = styled.div`
  display: flex;
  flex: none;
  height: 23px;
  padding-bottom: 2px;
  border-top: 1px solid #f4f4f4;
  border-bottom: 1px solid #8c8c8c;
  background: #d9d9d9;
`;

const CueCell = styled.div<{ $share?: number; $width?: number }>`
  display: flex;
  align-items: center;
  gap: 4px;
  ${p => (p.$width ? css`flex: none; width: ${p.$width}px;` : css`flex: ${p.$share} 1 0;`)}
  border-right: 1px solid #f6f6f6;
  font-weight: 700;
  font-size: 13px;
  white-space: nowrap;
  &:last-child { justify-content: flex-end; padding-right: 3px; border-right: 0; }
`;

/* ---------- left side ---------- */

const Main = styled.main`
  display: flex;
  flex: 1;
  min-height: 0;
`;

const TabStrip = styled.div`
  display: flex;
  flex-direction: column;
  align-items: flex-end;
  gap: 1px;
  flex: none;
  width: 30px;
  padding-top: 16px;
  background: linear-gradient(90deg, #a0a0a0, #b4b4b4 60%, #a4a4a4);
`;

const SideTab = styled.button<{ $active?: boolean; $spaced?: boolean }>`
  display: grid;
  place-items: center;
  width: ${p => (p.$active ? 28 : 27)}px;
  height: 41px;
  margin-top: ${p => (p.$spaced ? 12 : 0)}px;
  border: 1px solid #686868;
  border-right-width: ${p => (p.$active ? 0 : 1)}px;
  border-radius: 4px 0 0 4px;
  background: ${p => (p.$active ? '#ebebeb' : 'linear-gradient(90deg, #d6d6d6, #c6c6c6)')};
  box-shadow: inset 1px 1px 0 #f0f0f0;
`;

const sideTabs: [string, string, boolean?][] = [
  ['tabAssembly', '装配导航器'], ['tabCons', '约束导航器'], ['tabPart', '部件导航器'], ['tabBooks', '重用库'],
  ['tabInfo', 'HD3D 工具', true], ['tabWeb', 'Web 浏览器', true], ['clock', '历史记录', true], ['tabRoles', '系统材料'],
  ['tabColors', '可视化'], ['tabWand', '加工向导'], ['tabPeople', '角色'], ['tabFilm', '系统场景'],
];

const Panel = styled.section`
  display: flex;
  flex-direction: column;
  flex: none;
  width: 349px;
  padding: 0 9px 5px 8px;
  border: 1px solid #fff;
  border-right: 2px solid #777;
  border-bottom: 1px solid #888;
  background: #ebebeb;
`;

const PanelTitle = styled.h2`
  display: flex;
  align-items: center;
  gap: 12px;
  height: 29px;
  margin: 0;
  padding-left: 4px;
  font-size: 13px;
`;

const TreeFrame = styled.div`
  flex: 1;
  min-height: 0;
  overflow: hidden;
  border: 1px solid #666;
  background: #fff;
`;

const TreeTable = styled.table`
  width: 100%;
  table-layout: fixed;
  border-collapse: separate;
  border-spacing: 0;
`;

const HeadCell = styled.th<{ $width?: number }>`
  width: ${p => (p.$width ? `${p.$width}px` : 'auto')};
  height: 17px;
  padding: 0 0 0 6px;
  font-weight: 400;
  text-align: left;
  border-right: 1px solid #aaa;
  border-bottom: 1px solid #8c8c8c;
  background: linear-gradient(#fff, #e8e8e8 60%, #d6d6d6);
  &:last-child { border-right: 0; }
`;

const HeadLine = styled.span`
  display: flex;
  align-items: center;
  gap: 16px;
`;

const TreeRow = styled.tr`
  background: #fff;
  &:nth-child(even) { background: #f5f5f5; }
`;

const TreeCell = styled.td`
  height: 20px;
  padding: 0;
  border-right: 1px solid #dcdcdc;
  border-bottom: 1px solid #dedede;
  &:last-child { border-right: 0; }
`;

const NodeLine = styled.div`
  display: flex;
  align-items: center;
  height: 19px;
  color: #333;
  white-space: nowrap;
`;

const NodeIcons = styled.span`
  display: flex;
  margin-right: 2px;
`;

const Expander = styled.button`
  display: block;
  flex: none;
`;

const Blank = styled.span`
  flex: none;
  width: 20px;
`;

const CheckHolder = styled.span`
  position: relative;
  display: flex;
`;

const NodeCheck = styled.input`
  appearance: none;
  flex: none;
  width: 13px;
  height: 13px;
  margin: 0 2px 0 0;
  border: 1px solid #222;
  background: #fff;
  &:not(:checked) + span { display: none; }
`;

const CheckInk = styled.span`
  position: absolute;
  left: 1px;
  top: 1px;
  pointer-events: none;
`;

type TreeNode = { text: string; icons: string[]; level: number; fold?: '+' | '-'; last?: boolean; first?: boolean };

const nodes: TreeNode[] = [
  { text: '历史记录模式', icons: ['clock'], level: 0, first: true },
  { text: '模型视图', icons: ['views'], level: 0, fold: '+' },
  { text: '摄像机', icons: ['greenTick', 'camera'], level: 0, fold: '+' },
  { text: '用户表达式', icons: ['folderExpr'], level: 0 },
  { text: '模型历史记录', icons: ['folder'], level: 0, fold: '-', last: true },
  { text: '基准坐标系 (0)', icons: ['csys'], level: 1 },
  { text: '草图 (1) “SKETCH_...', icons: ['sketch'], level: 1 },
  { text: '拉伸 (2)', icons: ['extrude'], level: 1 },
  { text: '草图 (3) “SKETCH_...', icons: ['sketch'], level: 1 },
  { text: '回转 (4)', icons: ['revolveSm'], level: 1, last: true },
];

function Branch({ node }: { node: TreeNode }) {
  return (
    <Svg width="20" height="20" viewBox="0 0 20 20" aria-hidden="true">
      <path d={`M10.5 ${node.first ? 10 : 0}V${node.last ? 10 : 20}M10 10.5H19`} stroke="#999" strokeDasharray="1 1" fill="none" />
      {node.fold && (
        <>
          <rect x="5.5" y="5.5" width="8" height="8" rx="1.5" fill="#fff" stroke="#888" />
          <path d={node.fold === '+' ? 'M7 9.5H12M9.5 7V12' : 'M7 9.5H12'} stroke="#222" />
        </>
      )}
    </Svg>
  );
}

function NodeView({ node }: { node: TreeNode }) {
  return (
    <NodeLine>
      {node.level > 0 && <Blank />}
      {node.fold ? <Expander aria-label={`展开 ${node.text}`}><Branch node={node} /></Expander> : <Branch node={node} />}
      {node.level > 0 && (
        <CheckHolder>
          <NodeCheck type="checkbox" defaultChecked aria-label={node.text} />
          <CheckInk><Icon name="greenTick" size={11} /></CheckInk>
        </CheckHolder>
      )}
      <NodeIcons>{node.icons.map(n => <Icon key={n} name={n} size={16} />)}</NodeIcons>
      <span><Mixed text={node.text} /></span>
    </NodeLine>
  );
}

const Splitter = styled.div`
  display: flex;
  align-items: center;
  gap: 4px;
  height: 11px;
  &::before, &::after {
    content: "";
    flex: 1;
    height: 2px;
    border-top: 1px solid #a8a8a8;
    border-bottom: 1px solid #fff;
  }
`;

const SplitHandle = styled.span`
  width: 61px;
  height: 6px;
  border: 1px solid #fff;
  border-right-color: #888;
  border-bottom-color: #888;
  background: #d2d2d2;
`;

const FoldHeader = styled.div`
  display: flex;
  align-items: center;
  height: 23px;
  padding-left: 6px;
  border-top: 1px solid #fff;
  border-bottom: 1px solid #8c8c8c;
  background: linear-gradient(#f8f8f8, #ececec 50%, #dcdcdc 52%, #dadada);
`;

const FoldTitle = styled.h3`
  flex: 1;
  margin: 0;
  font-size: 13px;
  line-height: 20px;
`;

const FoldButton = styled.button`
  display: grid;
  place-items: center;
  align-self: stretch;
  width: 23px;
  border-left: 1px solid #a4a4a4;
  border-right: 1px solid #8c8c8c;
  box-shadow: inset 1px 0 0 #fff;
`;

function Fold({ title, open }: { title: string; open?: boolean }) {
  return (
    <FoldHeader>
      <FoldTitle>{title}</FoldTitle>
      <FoldButton aria-label={title} aria-expanded={!!open}>
        <Icon name={open ? 'chevUp' : 'chevDown'} size={15} />
      </FoldButton>
    </FoldHeader>
  );
}

/* ---------- graphics window ---------- */

const Viewport = styled.section`
  position: relative;
  flex: 1;
  min-width: 0;
  overflow: hidden;
  background: linear-gradient(#b6b7b9 0, #c4c5c7 20%, #d6d7d9 45%, #e4e5e7 72%, #e6e7e8 100%);
`;

const ModelView = styled.svg`
  position: absolute;
  left: 221px;
  top: 112px;
  font-family: "Liberation Sans", sans-serif;
`;

const TriadView = styled.svg`
  position: absolute;
  left: 13px;
  bottom: 49px;
  font-family: "Liberation Sans", sans-serif;
  font-size: 12px;
`;

const Callout = styled.div`
  position: absolute;
  left: 280px;
  top: 474px;
  display: flex;
  height: 24px;
  border: 1px solid #777;
  background: linear-gradient(#e4e4e4, #cacaca);
`;

const CalloutGrip = styled.span`
  display: grid;
  place-items: center;
  width: 12px;
  background: linear-gradient(90deg, #6c6c6c, #111);
`;

const CalloutText = styled.span`
  padding: 0 3px 0 5px;
  line-height: 22px;
`;

function Model() {
  return (
    <ModelView width="330" height="400" viewBox="0 0 330 400" role="img" aria-label="模型">
      <defs>
        <linearGradient id="wall" x1="0" x2="1">
          <stop offset="0" stopColor="#528f4a" />
          <stop offset="0.16" stopColor="#58984f" />
          <stop offset="0.28" stopColor="#60a257" />
          <stop offset="0.5" stopColor="#66a95d" />
          <stop offset="0.66" stopColor="#60a056" />
          <stop offset="0.82" stopColor="#568a4b" />
          <stop offset="1" stopColor="#558f4c" />
        </linearGradient>
        <radialGradient id="dome" gradientUnits="userSpaceOnUse" cx="21" cy="-46" r="150">
          <stop offset="0" stopColor="#fffc62" />
          <stop offset="0.08" stopColor="#ffec5c" />
          <stop offset="0.22" stopColor="#ffcf52" />
          <stop offset="0.42" stopColor="#ffb84e" />
          <stop offset="0.6" stopColor="#ffa44a" />
          <stop offset="0.78" stopColor="#ee963f" />
          <stop offset="1" stopColor="#b87838" />
        </radialGradient>
        <radialGradient id="ball" cx="0.4" cy="0.35">
          <stop offset="0" stopColor="#f4d890" />
          <stop offset="1" stopColor="#7c5c20" />
        </radialGradient>
      </defs>
      <g transform="translate(188 155.5) rotate(17)">
        <path d="M-124.5 0V148A124.5 24 0 0 0 123 148L124.5 0Z" fill="url(#wall)" stroke="#7cc873" strokeWidth="0.8" />
        <ellipse rx="124.5" ry="25" fill="#7cd96c" stroke="#2c62e0" strokeWidth="1.6" />
        <path d="M-105.5 0A105.5 105.5 0 0 1 105.5 0A105.5 20 0 0 1 -105.5 0Z" fill="url(#dome)" />
        <path d="M-105.5 0A105.5 20 0 0 0 105.5 0" fill="none" stroke="#f0903c" />
      </g>
      <path d="M152 56Q185 42 219 57" fill="none" stroke="#3838b8" />
      <g fill="none" stroke="#c8bc98" strokeWidth="0.9">
        <path d="M219 57L188 155" />
        <path d="M149 73L131 131M162 75L208 92L235 88L218 143" />
        <path d="M131 131L159 127L218 149" />
      </g>
      <path d="M91 116L188 155" stroke="#f0e4d0" fill="none" />
      <path d="M188 155L234 148" stroke="#cdc4b4" strokeWidth="1.2" fill="none" />
      <ellipse cx="236" cy="148" rx="4" ry="3" fill="#a8a8a0" />
      <text x="240" y="152" fontSize="11" fill="#b4b0a4">X</text>
      <g stroke="#0808d0" fill="#0808d0">
        <path d="M219 57L226 32" fill="none" />
        <path d="M228 30L220 45L226 47Z" />
        <path d="M218 56L221 58" fill="none" />
        <path d="M75 111L89 116L88 111Z" />
        <path d="M73 109L90 112" fill="none" />
      </g>
      <text x="226" y="30" fontSize="12" fill="#1818d8">Z</text>
      <text x="62" y="111" fontSize="12" fill="#1818d8">Y</text>
      <path d="M144.5 60.5L147 59L173 121L179 120.5L180 138L168 124L170.5 122.5Z" fill="#a89444" stroke="#685c24" strokeWidth="0.7" />
      <path d="M146 61L172 123L179 135" stroke="#d8c87c" fill="none" strokeWidth="0.8" />
      <path d="M111.5 234L91.5 362" stroke="#a89058" fill="none" />
      <circle cx="112" cy="232" r="4.5" fill="url(#ball)" />
    </ModelView>
  );
}

function Triad() {
  return (
    <TriadView width="64" height="50" viewBox="0 0 64 50" role="img" aria-label="坐标系">
      <path d="M28 18L39 17L55 23L48 44L38 46L22 38Z" fill="#cdcfd1" stroke="#9a9c9e" strokeWidth="0.8" />
      <path d="M28 18L44 23L55 23M44 23L38 46M33 18L28 39" fill="none" stroke="#b0b2b4" strokeWidth="0.8" />
      <path d="M40 46L9 34" stroke="#209838" strokeWidth="2" fill="none" />
      <path d="M8 33L18 34L16 39Z" fill="#188830" />
      <path d="M40 44L48 20" stroke="#1038d8" strokeWidth="3" fill="none" />
      <path d="M50 13L45 22L51 24Z" fill="#1038d8" />
      <path d="M40 46L54 43" stroke="#d82828" strokeWidth="2" fill="none" />
      <circle cx="40" cy="46" r="3.5" fill="#98a0a0" />
      <text x="0" y="36" fill="#209848">Y</text>
      <text x="48" y="12" fill="#2048e0">Z</text>
      <text x="52" y="48" fill="#d83838">X</text>
    </TriadView>
  );
}

/* ---------- dialog ---------- */

const Dialog = styled.div`
  position: absolute;
  top: 34px;
  right: 306px;
  width: 290px;
  border: 1px solid #777;
  border-bottom: 9px solid #1b1d1d;
  border-radius: 6px;
  background: #ebebeb;
  overflow: hidden;
`;

const DialogBar = styled.div`
  display: flex;
  align-items: stretch;
  height: 21px;
  background: linear-gradient(#4c4f50, #3a3c3d 30%, #1a1a1a 34%, #0c0c0c);
`;

const DialogTool = styled.button<{ $side?: 'left' }>`
  display: grid;
  place-items: center;
  width: 21px;
  ${p => (p.$side === 'left' ? 'border-right' : 'border-left')}: 1px solid #aaa;
`;

const DialogTitle = styled.h2`
  flex: 1;
  margin: 0;
  padding-left: 9px;
  font-size: 13px;
  line-height: 19px;
  color: #fff;
`;

const DialogBody = styled.div`
  padding: 3px 5px 11px 6px;
`;

const Box = styled.div<{ $height: number }>`
  display: flex;
  flex-direction: column;
  justify-content: ${p => (p.$height > 50 ? 'flex-start' : 'center')};
  gap: 4px;
  height: ${p => p.$height}px;
  padding: ${p => (p.$height > 50 ? '9px' : '0')} 8px 0 7px;
  border-left: 1px solid #8c8c8c;
  border-right: 2px solid #9a9a9a;
  background: #d2d2d2;
`;

const Field = styled.div<{ $hot?: boolean; $end?: boolean }>`
  display: flex;
  align-items: center;
  justify-content: ${p => (p.$end ? 'flex-end' : 'space-between')};
  gap: 4px;
  border-radius: 5px;
  background: ${p => (p.$hot ? 'linear-gradient(90deg, #e5a468, #e3a76e 25%, #d2d2d2 82%)' : 'none')};
`;

const FieldLabel = styled.span`
  display: flex;
  align-items: center;
  gap: 4px;
`;

const PickButton = styled.button<{ $hot?: boolean; $small?: boolean }>`
  display: grid;
  place-items: center;
  width: ${p => (p.$small ? 22 : 30)}px;
  height: ${p => (p.$small ? 22 : 30)}px;
  border: 2px solid #8a8c90;
  border-radius: 4px;
  background: ${p => (p.$hot ? 'linear-gradient(#fbe4d4, #f49a68)' : 'linear-gradient(#fdfdfd, #dfe2e8)')};
  box-shadow: 1px 1px 0 #eee;
`;

const HoleLabel = styled.label`
  display: flex;
  align-items: center;
  gap: 2px;
`;

const HoleCheck = styled.input`
  appearance: none;
  width: 16px;
  height: 16px;
  margin: 0;
  border: 1px solid #777;
  border-radius: 3px;
  background: linear-gradient(#f0f0f0, #cfcfcf 50%, #ececec);
`;

const ToleranceInput = styled.input`
  width: 57px;
  height: 17px;
  padding: 0 2px 0 14px;
  border: 1px solid #777;
  border-radius: 4px;
  background: #fff;
  font: 10px/14px "Liberation Mono", monospace;
`;

const ActionRow = styled.div`
  display: flex;
  justify-content: flex-end;
  gap: 7px;
  margin-top: 3px;
  padding: 5px 11px 0 0;
  border-top: 1px solid #c4c4c4;
  box-shadow: inset 0 1px 0 #fff;
`;

const ActionButton = styled.button<{ $primary?: boolean }>`
  width: 52px;
  height: 19px;
  line-height: 15px;
  border: 2px solid #858585;
  border-radius: 4px;
  background: ${p => (p.$primary
    ? 'linear-gradient(#d4f4c8, #a4e090 45%, #78d45c 55%, #a8f090)'
    : 'linear-gradient(#fff, #e8e8e8 45%, #d0d0d0 55%, #f4f4f4)')};
`;

function PickField({ text, icon, hot }: { text: string; icon: string; hot?: boolean }) {
  return (
    <Field $hot={hot}>
      <FieldLabel><Icon name="greenTick" size={15} /><span><Mixed text={text} /></span></FieldLabel>
      <PickButton $hot={hot} aria-label={text}><Icon name={icon} size={24} /></PickButton>
    </Field>
  );
}

function PatchDialog() {
  const [tolerance, setTolerance] = useState('0.001000');
  return (
    <Dialog role="dialog" aria-label="补片">
      <DialogBar>
        <DialogTool $side="left" aria-label="选项"><Icon name="gear" size={13} /></DialogTool>
        <DialogTitle>补片</DialogTitle>
        <DialogTool aria-label="重置"><Icon name="reset" size={13} /></DialogTool>
        <DialogTool aria-label="关闭"><Icon name="close" size={13} /></DialogTool>
      </DialogBar>
      <DialogBody>
        <Fold title="目标" open />
        <Box $height={47}><PickField text="选择体 (1)" icon="solid" /></Box>
        <Fold title="工具" open />
        <Box $height={47}><PickField text="选择片体 (1)" icon="sheet" hot /></Box>
        <Fold title="要移除的目标区域" open />
        <Box $height={39}>
          <Field>
            <span>反向</span>
            <PickButton $small aria-label="反向"><Icon name="reverse" size={16} /></PickButton>
          </Field>
        </Box>
        <Fold title="工具方向面" open />
        <Box $height={47}><PickField text="选择面 (1)" icon="faceCube" /></Box>
        <Fold title="设置" open />
        <Box $height={55}>
          <HoleLabel><HoleCheck type="checkbox" />在实体目标中开孔</HoleLabel>
          <Field as="label">
            <span>公差</span>
            <ToleranceInput type="text" value={tolerance} onChange={e => setTolerance(e.target.value)} />
          </Field>
        </Box>
        <Fold title="预览" open />
        <Box $height={47}>
          <Field $end>
            <span>显示结果</span>
            <PickButton aria-label="显示结果"><Icon name="glass" size={24} /></PickButton>
          </Field>
        </Box>
        <ActionRow>
          <ActionButton>确定</ActionButton>
          <ActionButton $primary>应用</ActionButton>
          <ActionButton>取消</ActionButton>
        </ActionRow>
      </DialogBody>
    </Dialog>
  );
}

/* ---------- desktop widgets ---------- */

const SpeedWidget = styled.aside`
  position: fixed;
  right: 49px;
  bottom: 48px;
  display: flex;
  align-items: center;
`;

const Gauge = styled.div`
  z-index: 1;
  width: 48px;
  height: 48px;
  margin-right: -24px;
  border: 2px solid #fff;
  border-radius: 50%;
  outline: 1px solid #888;
  outline-offset: -1px;
  background: linear-gradient(#0c7c50, #30a070 10%, #148458 46%, #48cc60 47%, #40c458);
  box-shadow: 0 2px 5px #666;
  color: #fff;
  font: 14px/44px "Liberation Sans", sans-serif;
  text-align: center;
`;

const SpeedPill = styled.div`
  display: flex;
  align-items: center;
  gap: 5px;
  height: 39px;
  padding: 0 3px 0 26px;
  border: 1px solid #999;
  border-radius: 20px;
  background: linear-gradient(#f8f8f8, #dedede);
  box-shadow: 0 3px 5px #aaa;
`;

const SpeedLines = styled.div`
  display: grid;
  grid-template-columns: 8px 36px;
  column-gap: 2px;
  align-items: center;
  font: 10px/15px "Liberation Sans", sans-serif;
  text-align: right;
`;

const ImeBar = styled.aside`
  position: fixed;
  right: 43px;
  bottom: 12px;
  display: flex;
  align-items: center;
  justify-content: space-between;
  width: 151px;
  height: 22px;
  padding: 0 7px;
  border: 1px solid #6a9cd4;
  border-radius: 3px;
  background: linear-gradient(#fff, #eef3fa);
  box-shadow: 0 0 2px #7ab0e8;
  color: #3f6fa8;
  font-weight: 700;
`;

const BottomBar = styled.footer`
  display: flex;
  flex: none;
  height: 33px;
  padding-left: 349px;
  border-top: 1px solid #f4f4f4;
  background: linear-gradient(#e2e2e2, #c8c8c8);
`;

function Arrow({ up }: { up?: boolean }) {
  return (
    <Svg width="8" height="9" viewBox="0 0 8 9" aria-hidden="true">
      <path d={up ? 'M4 0L7 4H5V9H3V4H1Z' : 'M4 9L7 5H5V0H3V5H1Z'} fill={up ? '#e84858' : '#208848'} />
    </Svg>
  );
}

function ComboMark() {
  return <Svg width="9" height="6" viewBox="0 0 9 6"><path d="M0 0H9L4.5 6Z" fill="#111" /></Svg>;
}

export default function App() {
  return (
    <Page>
      <Global />
      <Ramps />
      <TitleBar>
        <Icon name="nx" size={16} />
        <TitleText>NX 8.5 - 建模 - [_model1.prt （修改的）]</TitleText>
        <Brand>SIEMENS</Brand>
        <WindowButton aria-label="最小化"><Glyph kind="min" color="#fff" /></WindowButton>
        <WindowButton aria-label="还原"><Glyph kind="restore" color="#fff" /></WindowButton>
        <WindowButton $danger aria-label="关闭"><Glyph kind="close" color="#fff" /></WindowButton>
      </TitleBar>
      <MenuBar>
        <MenuLead><Grip /><Icon name="part" size={16} /></MenuLead>
        {menus.map(m => <MenuItem key={m}><Mixed text={m} mnemonic /></MenuItem>)}
        <MdiButtons>
          <MdiButton aria-label="最小化文档"><Glyph kind="min" color="#666" /></MdiButton>
          <MdiButton aria-label="还原文档"><Glyph kind="restore" color="#666" /></MdiButton>
          <MdiButton aria-label="关闭文档"><Glyph kind="close" color="#555" /></MdiButton>
        </MdiButtons>
      </MenuBar>
      {toolRows.map(row => (
        <ToolRow key={row.bars[0][0]} $height={row.height} $tone={row.tone}>
          {row.bars.map(([spec, gap]) => <Toolbar key={spec} spec={spec} gap={gap} />)}
        </ToolRow>
      ))}
      <SelectionBar>
        <Combo $width={110}>
          <ComboSelect aria-label="类型过滤器"><option>片体</option></ComboSelect>
          <ComboArrow><ComboMark /></ComboArrow>
        </Combo>
        <Combo $width={116}>
          <ComboSelect aria-label="选择范围"><option>仅在工作部件内</option></ComboSelect>
          <ComboArrow><ComboMark /></ComboArrow>
        </Combo>
        <Items small spec="selFilter | selReset selAll v selSnap selGray | selRect v | selWire selCube | selMove selMove2 snEnd snMid snCtrl snInt snCenter snQuad snPoint snOn snFace | snGrid" />
        <Spacer />
        <Caret low />
      </SelectionBar>
      <CueBar>
        <CueCell $share={748}>选择用于修补的体</CueCell>
        <CueCell $share={750} />
        <CueCell $width={20} />
        <CueCell $width={36} />
        <CueCell $width={42}><Icon name="flag" size={16} /><Icon name="fullscreen" size={15} /></CueCell>
      </CueBar>
      <Main>
        <TabStrip>
          {sideTabs.map(([icon, label, spaced]) => (
            <SideTab key={icon} $active={icon === 'tabPart'} $spaced={spaced} aria-label={label}>
              <Icon name={icon} size={22} />
            </SideTab>
          ))}
        </TabStrip>
        <Panel>
          <PanelTitle><Icon name="pin" size={13} />部件导航器</PanelTitle>
          <TreeFrame>
            <TreeTable>
              <thead>
                <tr>
                  <HeadCell $width={201}>
                    <HeadLine>
                      名称
                      <Svg width="10" height="6" viewBox="0 0 10 6"><path d="M0 6L5 0L10 6Z" fill="#222" /></Svg>
                    </HeadLine>
                  </HeadCell>
                  <HeadCell $width={100}>附注</HeadCell>
                  <HeadCell />
                </tr>
              </thead>
              <tbody>
                {Array.from({ length: 25 }, (_, i) => (
                  <TreeRow key={i}>
                    <TreeCell>{nodes[i] && <NodeView node={nodes[i]} />}</TreeCell>
                    <TreeCell />
                    <TreeCell />
                  </TreeRow>
                ))}
              </tbody>
            </TreeTable>
          </TreeFrame>
          <Splitter><SplitHandle /></Splitter>
          <Fold title="相依性" />
          <Fold title="细节" />
          <Fold title="预览" />
        </Panel>
        <Viewport>
          <Model />
          <Callout>
            <CalloutGrip>
              <Svg width="8" height="11" viewBox="0 0 8 11" aria-hidden="true">
                <path d="M0 0H2V2H0ZM5 0H7V2H5ZM0 4H2V6H0ZM5 4H7V6H5ZM0 8H2V10H0ZM5 8H7V10H5Z" fill="#a8a8a8" />
              </Svg>
            </CalloutGrip>
            <CalloutText>目标</CalloutText>
          </Callout>
          <Triad />
          <PatchDialog />
        </Viewport>
      </Main>
      <BottomBar>
        <Toolbar spec="skNew flag:完成草图 profile line arc circle skFillet skChamfer rect spline plus skOffset v | qTrim qExtend mkCorner | autoDim v | geoCons symm autoCons v | skEdit skAttach skUpdate e" />
      </BottomBar>
      <SpeedWidget>
        <Gauge>57%</Gauge>
        <SpeedPill>
          <SpeedLines>
            <Arrow up /><span>2.6K/s</span>
            <Arrow /><span>16.2K/s</span>
          </SpeedLines>
          <Svg width="20" height="20" viewBox="0 0 20 20" aria-hidden="true">
            <circle cx="9" cy="11" r="8" fill="#3878d8" stroke="#2458a8" />
            <path d="M9 7V15M5 11H13" stroke="#fff" strokeWidth="2" />
            <circle cx="15" cy="5" r="4" fill="#e02820" stroke="#a01810" strokeWidth="0.8" />
          </Svg>
        </SpeedPill>
      </SpeedWidget>
      <ImeBar>
        <Icon name="qBox" size={16} />
        <span>中</span>
        <Icon name="moon" size={13} />
        <Icon name="punct" size={13} />
        <Icon name="keyboard" size={15} />
        <Icon name="person" size={13} />
        <Icon name="wrench" size={14} />
      </ImeBar>
    </Page>
  );
}
